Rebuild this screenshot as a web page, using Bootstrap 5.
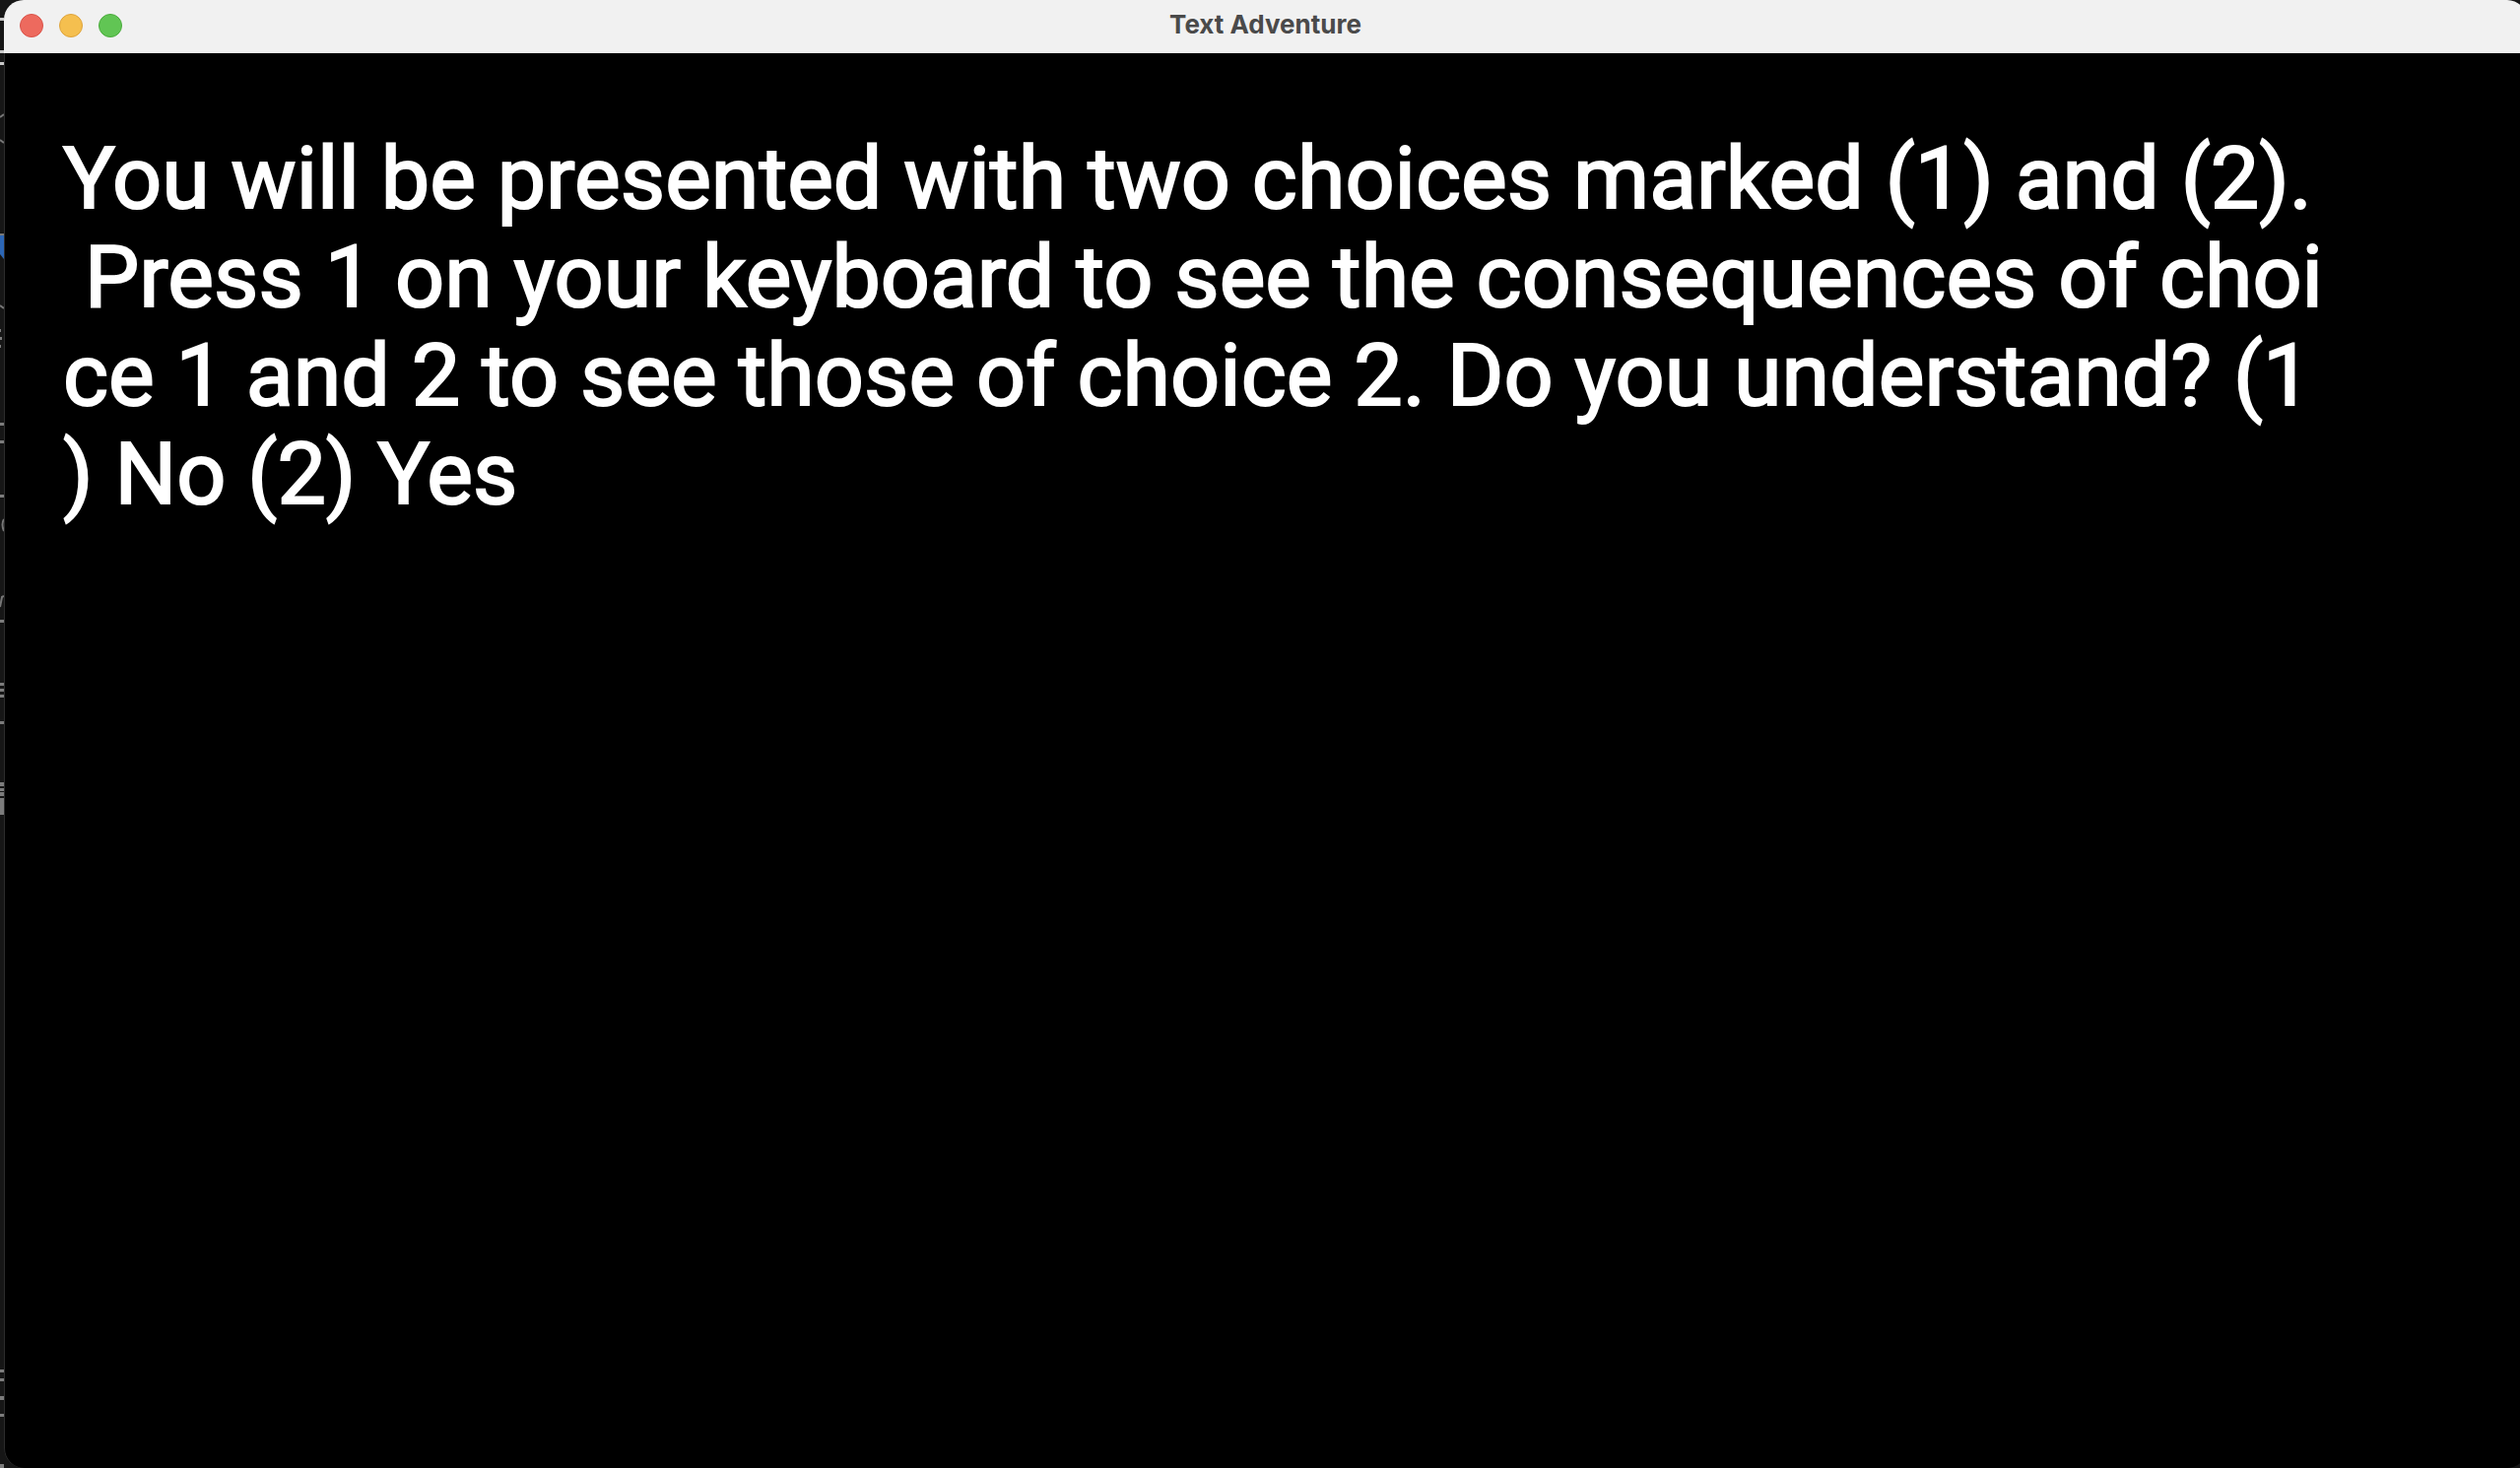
<!DOCTYPE html>
<html lang="en">
<head>
<meta charset="utf-8">
<meta name="viewport" content="width=device-width, initial-scale=1">
<title>Text Adventure</title>
<link href="https://cdn.jsdelivr.net/npm/bootstrap@5.3.0/dist/css/bootstrap.min.css" rel="stylesheet">
<style>
  body { background: #161616; }
  .desk-edge { width: 4px; }
  .app-window { margin-right: -7px; border-radius: 20px; background: #000; box-shadow: inset 1px 0 #2c2c2c; }
  .title-bar { height: 54px; padding: 0 16px; background: #f1f1f1; display: grid; grid-template-columns: 1fr auto 1fr; }
  .window-title { font: 700 26px/50px Inter, sans-serif; color: #4a4a4a; }
  .lights { gap: 16px; height: 52px; }
  .light { width: 24px; height: 24px; border: 1px solid; }
  .light-close { background: #ed6a5e; border-color: #d9534a; }
  .light-min { background: #f5bf4f; border-color: #dda33c; }
  .light-zoom { background: #61c554; border-color: #4aab3c; }
  .story { font: 400 88px/100px Roboto, sans-serif; padding: 77px 60px; white-space: pre; color: #fff; -webkit-text-stroke: 2px #fff; }
</style>
</head>
<body class="vh-100 overflow-hidden d-flex">
  <svg class="desk-edge flex-shrink-0" height="1490" viewBox="0 0 4 1490" aria-hidden="true">
    <g fill="#c9c9c9"><path d="M0 18h4v3H0zM0 51h4v3H0zM0 63h4v3H0z"/></g>
    <g fill="none" stroke="#777" stroke-width="2"><path d="M0 119l4-3M0 142l4 3M0 310l4 3M4 527q-3 5 0 12M0 616l2-10 2-1"/></g>
    <path fill="#777" d="M0 237h4v2H0z"/>
    <path fill="#2c66b5" d="M0 239h4v24L0 258z"/>
    <path fill="#7c7c7c" d="M0 334h1v3H0zM0 342h2v3H0zM0 350h1v3H0zM0 429h4v3H0zM0 447h4v3H0zM0 502h4v3H0zM0 629h4v3H0zM0 693h4v3H0zM0 699h4v3H0zM0 705h4v3H0zM0 732h4v3H0zM0 794h4v4H0zM0 800h4v3H0zM0 804h4v4H0zM0 810h4v17H0zM0 1390h4v3H0zM0 1399h4v3H0zM0 1417h4v4H0zM0 1435h4v3H0zM0 1486h4v4H0z"/>
  </svg>
  <main class="app-window flex-grow-1 overflow-hidden">
    <header class="title-bar">
      <div class="lights d-flex align-items-center">
        <button type="button" class="light light-close rounded-circle p-0" aria-label="Close"></button>
        <button type="button" class="light light-min rounded-circle p-0" aria-label="Minimize"></button>
        <button type="button" class="light light-zoom rounded-circle p-0" aria-label="Zoom"></button>
      </div>
      <h1 class="window-title m-0">Text Adventure</h1>
    </header>
    <p class="story m-0">You will be presented with two choices marked (1) and (2).
 Press 1 on your keyboard to see the consequences of choi
ce 1 and 2 to see those of choice 2. Do you understand? (1
) No (2) Yes</p>
  </main>
<script src="https://cdn.jsdelivr.net/npm/bootstrap@5.3.0/dist/js/bootstrap.bundle.min.js"></script>
</body>
</html>
